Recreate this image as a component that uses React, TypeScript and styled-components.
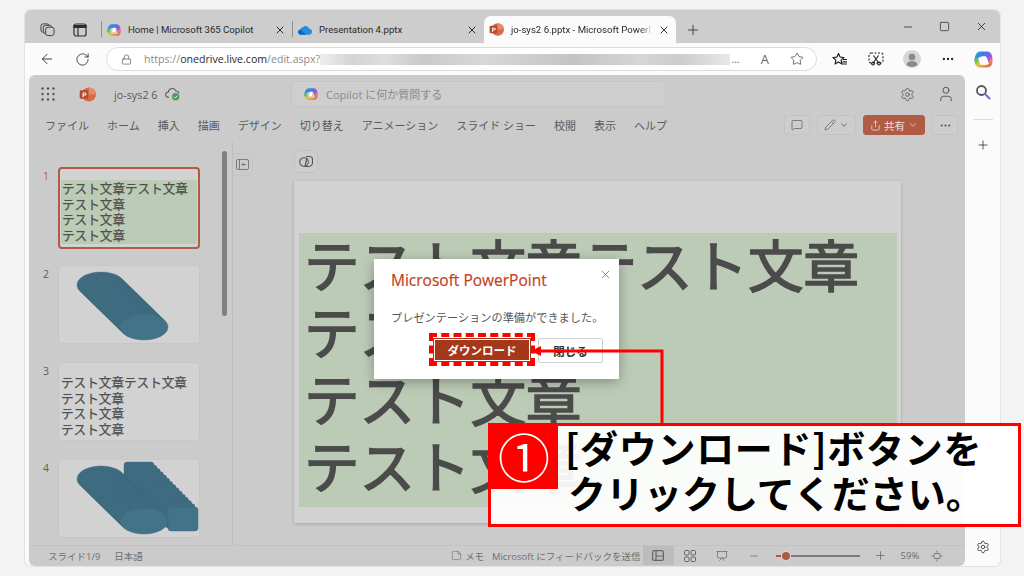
import React from "react";
import styled, { createGlobalStyle } from "styled-components";
import {
  ArrowLeft,
  RotateCw,
  Lock,
  Star,
  Ellipsis,
  Plus,
  Settings,
  User,
  X,
  Minus,
  Square,
  MessageSquare,
  Pencil,
  ChevronDown,
  Share,
  Presentation,
  StickyNote,
} from "lucide-react";

const Global = createGlobalStyle`
  html, body { margin: 0; padding: 0; background: #f3f3f3; }
  body { font-family: "Open Sans", "Noto Sans CJK JP", sans-serif; overflow: hidden; }
  * { box-sizing: border-box; }
`;

const Page = styled.div`
  position: relative;
  width: 1024px;
  height: 576px;
  padding: 10px 24px 10px 25px;
  overflow: hidden;
`;

const Browser = styled.div`
  height: 556px;
  border-radius: 6px;
  background: #f9f9f9;
  overflow: hidden;
  display: flex;
  flex-direction: column;
  box-shadow: 0 0 0 1px #e2e2e2;
`;

const TabStrip = styled.div`
  height: 33px;
  flex: none;
  background: #cdcdcd;
  display: flex;
  align-items: flex-end;
  padding-left: 14px;
`;

const StripIcon = styled.div<{ $mr?: number; $ml?: number }>`
  width: 16px;
  height: 27px;
  margin-left: ${(p) => p.$ml ?? 0}px;
  margin-right: ${(p) => p.$mr ?? 17}px;
  display: flex;
  align-items: center;
  justify-content: center;
  color: #3c3c3c;
`;

const Sep = styled.div`
  width: 1px;
  height: 16px;
  background: #8f8f8f;
  margin-bottom: 6px;
  flex: none;
`;

const Tab = styled.div<{ $active?: boolean; $w: number }>`
  width: ${(p) => p.$w}px;
  height: 27px;
  flex: none;
  display: flex;
  align-items: center;
  padding: 0 6px 0 5px;
  gap: 6px;
  font-family: Roboto, "Noto Sans CJK JP", sans-serif;
  font-size: 9.6px;
  color: #2a2a2a;
  border-radius: 7px 7px 0 0;
  background: ${(p) => (p.$active ? "#fbfbfb" : "transparent")};
`;

const TabTitle = styled.span<{ $fade?: boolean }>`
  flex: 1;
  white-space: nowrap;
  overflow: hidden;
  padding-left: 1px;
  ${(p) => p.$fade && "mask-image: linear-gradient(90deg, #000 92%, transparent 100%);"}
`;

const WindowButtons = styled.div`
  margin-left: auto;
  height: 33px;
  display: flex;
  align-items: center;
  gap: 25px;
  padding: 0 12px 0 0;
  color: #222;
`;

const AddressRow = styled.div`
  height: 32px;
  flex: none;
  background: #fbfbfb;
  display: flex;
  align-items: center;
  padding-left: 14px;
  color: #333;
`;

const NavIcon = styled.div<{ $w?: number }>`
  width: ${(p) => p.$w ?? 36}px;
  flex: none;
  display: flex;
  align-items: center;
  color: #333;
`;

const UrlPill = styled.div`
  width: 711px;
  height: 24px;
  flex: none;
  margin-left: 2px;
  border: 1px solid #dcdcdc;
  border-radius: 12px;
  background: #fff;
  display: flex;
  align-items: center;
  padding-left: 14px;
  font-size: 10.6px;
  color: #8a8a8a;
`;

const UrlLock = styled(Lock)`
  margin-right: 12px;
  color: #555;
  flex: none;
`;

const UrlHost = styled.span`
  color: #2a2a2a;
`;

const UrlBlur = styled.div`
  width: 410px;
  height: 11px;
  flex: none;
  background: linear-gradient(90deg, #eee 0%, #d4d4d4 8%, #dedede 16%, #c9c9c9 25%, #d8d8d8 40%, #cfcfcf 50%, #c4c4c4 62%, #d6d6d6 78%, #cccccc 88%, #e8e8e8 100%);
  filter: blur(0.6px);
`;

const UrlTail = styled.div`
  margin-left: auto;
  display: flex;
  align-items: center;
  gap: 21px;
  padding-right: 12px;
  color: #666;
`;

const ReadAloud = styled.span`
  font-size: 13px;
`;

const ToolGroup = styled.div`
  display: flex;
  align-items: center;
  margin-left: 15px;
  gap: 19.5px;
  color: #222;
`;

const Avatar = styled.svg`
  width: 18px;
  height: 18px;
  flex: none;
`;

const Body = styled.div`
  flex: 1;
  display: flex;
  min-height: 0;
  padding-left: 4px;
`;

const PptApp = styled.div`
  width: 936px;
  flex: none;
  background: #cbcbcb;
  border-radius: 6px;
  display: flex;
  flex-direction: column;
  overflow: hidden;
`;

const AppHeader = styled.div`
  height: 35px;
  flex: none;
  display: flex;
  align-items: center;
  padding: 3px 0 0 12px;
  color: #555;
`;

const LogoGap = styled.span`
  width: 24px;
  flex: none;
`;

const DocName = styled.span`
  font-size: 10.8px;
  color: #5a5a5a;
  margin-left: 18px;
  width: 51px;
  white-space: nowrap;
`;

const AskBox = styled.div`
  width: 375px;
  height: 26px;
  margin-left: 110px;
  border: 1px solid #c4c4c4;
  border-radius: 4px;
  background: #cecece;
  display: flex;
  align-items: center;
  gap: 8px;
  padding-left: 12px;
  font-size: 11px;
  color: #8b8b8b;
`;

const HeaderRight = styled.div`
  margin-left: auto;
  display: flex;
  align-items: center;
  gap: 22px;
  padding-right: 10px;
  color: #555;
`;

const Ribbon = styled.div`
  height: 32px;
  flex: none;
  display: flex;
  align-items: center;
  padding: 0 7px 2px 16px;
  font-size: 11px;
  color: #5a5a5a;
  gap: 18px;
`;

const RibbonItem = styled.span`
  white-space: nowrap;
`;

const RibbonRight = styled.div`
  margin-left: auto;
  display: flex;
  align-items: center;
  gap: 7px;
`;

const RibbonBtn = styled.div<{ $w: number; $primary?: boolean }>`
  width: ${(p) => p.$w}px;
  height: 20px;
  border-radius: 3px;
  border: 1px solid ${(p) => (p.$primary ? "#b05c45" : "#c3c3c3")};
  background: ${(p) => (p.$primary ? "#b05c45" : "#cdcdcd")};
  color: ${(p) => (p.$primary ? "#e4cfc8" : "#5a5a5a")};
  display: flex;
  align-items: center;
  justify-content: center;
  gap: 3px;
  font-size: 10.5px;
  font-weight: 500;
`;

const Main = styled.div`
  flex: 1;
  display: flex;
  min-height: 0;
`;

const ThumbPanel = styled.div`
  width: 204px;
  flex: none;
  display: flex;
  border-right: 1px solid #bdbdbd;
`;

const ThumbList = styled.div`
  width: 193px;
  padding-top: 25px;
  display: flex;
  flex-direction: column;
  gap: 18px;
  flex: none;
`;

const ThumbRow = styled.div`
  display: flex;
`;

const ThumbNum = styled.div<{ $active?: boolean }>`
  width: 29px;
  padding: 2px 0 0 14px;
  font-size: 10.5px;
  color: ${(p) => (p.$active ? "#b05c45" : "#5e5e5e")};
  flex: none;
`;

const Thumb = styled.div<{ $active?: boolean }>`
  width: 142px;
  height: ${(p) => (p.$active ? 82 : 79)}px;
  margin-bottom: ${(p) => (p.$active ? -2 : 0)}px;
  padding-bottom: ${(p) => (p.$active ? 3 : 3)}px;
  background: #d2d2d2;
  border-radius: 4px;
  border: ${(p) => (p.$active ? "2px solid #b05c45" : "1px solid #c7c7c7")};
  overflow: hidden;
  display: flex;
  flex-direction: column;
  justify-content: flex-end;
`;

const ArtThumb = styled(Thumb)`
  padding-bottom: 0;
  justify-content: flex-start;
`;

const ThumbText = styled.div<{ $green?: boolean }>`
  margin: 0 ${(p) => (p.$green ? 1 : 0)}px;
  padding: 0 0 ${(p) => (p.$green ? 2 : 1)}px ${(p) => (p.$green ? 1 : 2)}px;
  background: ${(p) => (p.$green ? "#bccbb6" : "transparent")};
  font-size: 12.6px;
  line-height: 15.4px;
  color: #4f4f4f;
  white-space: nowrap;
  font-family: "Noto Sans CJK JP", sans-serif;
  -webkit-text-stroke: 0.25px #4f4f4f;
`;

const ScrollBar = styled.div`
  width: 5px;
  height: 165px;
  margin-top: 9px;
  border-radius: 3px;
  background: #808080;
  flex: none;
`;

const Canvas = styled.div`
  flex: 1;
  display: flex;
  padding-top: 8px;
`;

const CollapseBtn = styled.div`
  width: 20px;
  height: 23px;
  margin-top: 3px;
  border: 1px solid #c3c3c3;
  border-left: none;
  border-radius: 0 5px 5px 0;
  color: #7a7a7a;
  display: flex;
  align-items: center;
  justify-content: center;
  flex: none;
`;

const SlideCol = styled.div`
  margin-left: 41px;
  width: 607px;
  display: flex;
  flex-direction: column;
  gap: 8px;
`;

const SmallTool = styled.div`
  width: 24px;
  height: 23px;
  border: 1px solid #c3c3c3;
  border-radius: 5px;
  background: #cdcdcd;
  color: #555;
  display: flex;
  align-items: center;
  justify-content: center;
`;

const Slide = styled.div`
  width: 607px;
  height: 342px;
  background: #d2d2d2;
  box-shadow: 0 1px 3px rgba(0, 0, 0, 0.2);
  padding: 52px 4px 16px 5px;
`;

const SlideGreen = styled.div`
  height: 274px;
  background: #bccbb6;
  padding-left: 5px;
  overflow: hidden;
`;

const SlideLines = styled.div`
  margin-top: -3px;
  font-family: "Noto Sans CJK JP", sans-serif;
  font-size: 55.5px;
  line-height: 67px;
  color: #4b4b4b;
  white-space: nowrap;
  -webkit-text-stroke: 1.6px #4b4b4b;
`;

const StatusBar = styled.div`
  height: 21px;
  flex: none;
  display: flex;
  align-items: stretch;
  padding: 0 0 1px 19px;
  font-size: 9.5px;
  color: #6e6e6e;
  border-top: 1px solid #c3c3c3;
`;

const StatusText = styled.span<{ $ml?: number }>`
  margin-left: ${(p) => p.$ml ?? 0}px;
  white-space: nowrap;
  display: flex;
  align-items: center;
  gap: 3px;
`;

const ViewBtn = styled.div<{ $on?: boolean; $w?: number; $ml?: number }>`
  width: ${(p) => p.$w ?? 32}px;
  margin-left: ${(p) => p.$ml ?? 0}px;
  flex: none;
  display: flex;
  align-items: center;
  justify-content: center;
  background: ${(p) => (p.$on ? "#bcbcbc" : "transparent")};
  color: #666;
`;

const ZoomTrack = styled.div`
  width: 84px;
  height: 2px;
  background: #7c7c7c;
  position: relative;
  align-self: center;
  margin: 0 5px 0 6px;
  flex: none;
`;

const ZoomDone = styled.div`
  position: absolute;
  left: 0;
  top: 0;
  width: 6px;
  height: 2px;
  background: #b05c45;
`;

const ZoomKnob = styled.div`
  position: absolute;
  left: 6px;
  top: -3px;
  width: 8px;
  height: 8px;
  border-radius: 50%;
  background: #b05c45;
  box-shadow: 0 0 0 1px #d8d8d8;
`;

const SideRail = styled.div`
  flex: 1;
  background: #fbfbfb;
  display: flex;
  flex-direction: column;
  align-items: center;
  padding: 9px 0 12px;
  color: #333;
`;

const RailRule = styled.div`
  width: 20px;
  height: 1px;
  background: #dcdcdc;
  margin: 19px 0 18px;
`;

const RailBottom = styled.div`
  margin-top: auto;
  display: flex;
`;

const Dialog = styled.div`
  position: absolute;
  left: 374px;
  top: 259px;
  width: 245px;
  height: 120px;
  background: #fff;
  box-shadow: 0 3px 12px rgba(0, 0, 0, 0.3);
  padding: 11px 16px 0 17px;
`;

const DialogClose = styled.div`
  position: absolute;
  top: 5px;
  right: 7px;
  color: #666;
`;

const DialogTitle = styled.div`
  font-size: 15.5px;
  line-height: 20px;
  color: #c43e1c;
  -webkit-text-stroke: 0.2px #c43e1c;
`;

const DialogText = styled.div`
  margin-top: 20px;
  font-size: 11.2px;
  line-height: 16px;
  color: #555;
  white-space: nowrap;
`;

const DialogActions = styled.div`
  margin-top: 12px;
  display: flex;
  justify-content: flex-end;
  gap: 8px;
`;

const PrimaryBtn = styled.div`
  width: 96px;
  height: 22px;
  margin-top: 1px;
  background: #a5371b;
  box-shadow: inset 0 0 0 1px #fff, 0 0 0 1px #a5371b;
  color: #fff;
  font-size: 11.5px;
  font-weight: 700;
  display: flex;
  align-items: center;
  justify-content: center;
  position: relative;
`;

const Dashed = styled.div`
  position: absolute;
  left: -5px;
  top: -6px;
  width: 106px;
  height: 33px;
  border: 4px dashed #f00;
`;

const SecondaryBtn = styled.div`
  width: 65px;
  height: 25px;
  border: 1px solid #cfcfcf;
  border-radius: 2px;
  color: #333;
  font-size: 11.5px;
  font-weight: 700;
  display: flex;
  align-items: center;
  justify-content: center;
`;

const ArrowLayer = styled.svg`
  position: absolute;
  left: 0;
  top: 0;
  pointer-events: none;
`;

const Callout = styled.div`
  position: absolute;
  left: 488px;
  top: 423px;
  width: 533px;
  height: 104px;
  border: 3px solid #f00;
  background: rgba(255, 255, 255, 0.93);
  display: flex;
  font-family: "Noto Sans CJK JP", sans-serif;
  color: #000;
`;

const CalloutBadge = styled.div`
  width: 68px;
  height: 64px;
  margin: -1px 0 0 -1px;
  flex: none;
  background: #f00;
  color: #fff;
  font-size: 52px;
  line-height: 62px;
  text-align: center;
`;

const CalloutText = styled.div`
  padding: 0 0 0 7px;
  font-size: 38px;
  font-weight: 700;
  line-height: 45px;
  margin-top: -2px;
  white-space: nowrap;
`;

const CalloutLine = styled.div<{ $ml?: number; $ls?: number }>`
  margin-left: ${(p) => p.$ml ?? 0}px;
  letter-spacing: ${(p) => p.$ls ?? 0}px;
`;

const CopilotIcon = ({ size = 14 }: { size?: number }) => (
  <svg width={size} height={size} viewBox="0 0 24 24">
    <defs>
      <linearGradient id="cpTop" x1="0" y1="0" x2="1" y2="0.6">
        <stop offset="0" stopColor="#2fb5c9" />
        <stop offset="0.35" stopColor="#2f86ea" />
        <stop offset="0.7" stopColor="#7b5fe6" />
        <stop offset="1" stopColor="#d95bc0" />
      </linearGradient>
      <linearGradient id="cpBottom" x1="0" y1="0.3" x2="1" y2="1">
        <stop offset="0" stopColor="#49b96b" />
        <stop offset="0.35" stopColor="#e9c53a" />
        <stop offset="0.7" stopColor="#f0813a" />
        <stop offset="1" stopColor="#e6487f" />
      </linearGradient>
    </defs>
    <path d="M8 2h8c4 0 6 2 7 6 .5 3 .5 6-.5 9-1 1.500-3 1.500-4-.5l-2-6c-.5-1.500-1.500-2-3-2H9C7 8.500 5 10 4.500 12L3.500 15C2.500 16.500 1 16 .8 14 .5 8 3 2 8 2z" fill="url(#cpTop)" />
    <path d="M16 22H8c-4 0-6-2-7-6-.5-3-.5-5 1-6.500C3 8.500 5 9 5.500 11l2 6c.5 1.500 1.500 2 3 2H15c2 0 4-1.500 4.500-3.500l1-3c1-1.500 2.500-1 2.700 1 .3 5.500-2.200 8.500-7.200 8.500z" fill="url(#cpBottom)" />
    <path d="M10 8h5l-1.500 8H9z" fill="#fff" />
  </svg>
);

const PptIcon = ({ size = 16 }: { size?: number }) => (
  <svg width={size} height={size} viewBox="0 0 24 24">
    <circle cx="14" cy="12" r="10" fill="#d8684a" />
    <path d="M14 2a10 10 0 0 1 10 10H14z" fill="#e98a6c" />
    <rect x="1" y="6" width="12" height="12" rx="2" fill="#b5492c" />
    <path d="M5 9h3.500a2.200 2.200 0 0 1 0 4.400H6.500V16H5zM6.500 10.300v1.800h1.800a.9.9 0 0 0 0-1.800z" fill="#fff" />
  </svg>
);

const OneDriveIcon = () => (
  <svg width="14" height="10" viewBox="0 0 24 16">
    <path d="M9 3a6 6 0 0 1 10 3c3 0 5 2 5 5s-2 5-5 5H5c-3 0-5-2-5-4.500S2 7 4 7c1-2 3-4 5-4z" fill="#1f8fe0" />
    <path d="M0 11.500C0 9 2 7 4.500 7L14 16H5c-3 0-5-2-5-4.500z" fill="#0f6cbd" />
  </svg>
);

const CloudCheck = () => (
  <svg width="16" height="14" viewBox="0 0 24 20" fill="none">
    <path d="M6 15H5a4 4 0 0 1 0-8 6 6 0 0 1 11.500-1.500A4.500 4.500 0 0 1 21 9" stroke="#5a5a5a" strokeWidth="1.600" />
    <circle cx="16" cy="14" r="5.500" fill="#4f9a5c" />
    <path d="M13.500 14l2 2 3-3.500" stroke="#dfe" strokeWidth="1.300" />
  </svg>
);

const Waffle = () => (
  <svg width="14" height="14" viewBox="0 0 14 14" fill="#555">
    {[1.5, 7, 12.5].map((y) =>
      [1.5, 7, 12.5].map((x) => <circle key={`${x}-${y}`} cx={x} cy={y} r="1.200" />)
    )}
  </svg>
);

const WorkspacesIcon = () => (
  <svg width="15" height="15" viewBox="0 0 16 16" fill="#cdcdcd" stroke="#3c3c3c" strokeWidth="1">
    <rect x="1" y="2" width="9" height="9" rx="2.500" />
    <rect x="3.500" y="3.500" width="9" height="9" rx="2.500" />
    <rect x="6" y="5.500" width="9" height="9" rx="2.500" />
  </svg>
);

const VerticalTabsIcon = () => (
  <svg width="14" height="14" viewBox="0 0 14 14" fill="none" stroke="#2e2e2e" strokeWidth="1.200">
    <rect x="1" y="1" width="12" height="12" rx="2" />
    <path d="M1 2.500h12v2H1z" fill="#2e2e2e" />
    <path d="M5 4v9" />
  </svg>
);

const FavoritesIcon = () => (
  <svg width="16" height="15" viewBox="0 0 16 15" fill="none" stroke="#222" strokeWidth="1.200" strokeLinejoin="round">
    <path d="M6.500 1.500l1.600 3.600 3.900.4-2.900 2.600.8 3.800-3.400-2-3.400 2 .8-3.800L1 5.500l3.900-.4z" />
    <path d="M11 7.500h4M10.500 9.800h4.500M10 12h5" />
  </svg>
);

const ScreenshotIcon = () => (
  <svg width="16" height="14" viewBox="0 0 16 14" fill="none" stroke="#222" strokeWidth="1.100">
    <rect x="1" y="1" width="14" height="10" rx="2" strokeDasharray="2 1.500" />
    <path d="M5.500 3.500l5 7M10.500 3.500l-5 7" />
    <circle cx="5" cy="11.500" r="1.400" />
    <circle cx="11" cy="11.500" r="1.400" />
  </svg>
);

const SearchIcon = () => (
  <svg width="16" height="16" viewBox="0 0 16 16" fill="none">
    <circle cx="6.500" cy="6.500" r="4.500" stroke="#555" strokeWidth="1.800" />
    <path d="M10 10l4.500 4.500" stroke="#8a5bd6" strokeWidth="2" strokeLinecap="round" />
  </svg>
);

const ReadPanelIcon = () => (
  <svg width="13" height="11" viewBox="0 0 13 11" fill="none" stroke="#7a7a7a" strokeWidth="1">
    <rect x="0.500" y="0.500" width="12" height="10" rx="1.500" />
    <path d="M3.500 1v9M10 5.500H6M7.500 4L6 5.500 7.500 7" />
  </svg>
);

const DesignerIcon = () => (
  <svg width="14" height="14" viewBox="0 0 14 14" fill="none" stroke="#555" strokeWidth="1.100">
    <circle cx="5" cy="7" r="4.300" />
    <path d="M7 1.500h3.500a3 3 0 0 1 3 3v3a4 4 0 0 1-4 4H5.500" />
    <path d="M8 3l-2 8" />
  </svg>
);

const NormalViewIcon = () => (
  <svg width="12" height="11" viewBox="0 0 12 11" fill="none" stroke="#666" strokeWidth="1.200">
    <rect x="0.600" y="0.600" width="10.800" height="9.800" rx="1.500" />
    <path d="M4 1v9M4 6h7" />
  </svg>
);

const SorterIcon = () => (
  <svg width="12" height="12" viewBox="0 0 12 12" fill="none" stroke="#666" strokeWidth="1">
    <rect x="0.500" y="0.500" width="4.500" height="4.500" rx="1" />
    <rect x="7" y="0.500" width="4.500" height="4.500" rx="1" />
    <rect x="0.500" y="7" width="4.500" height="4.500" rx="1" />
    <rect x="7" y="7" width="4.500" height="4.500" rx="1" />
  </svg>
);

const FitIcon = () => (
  <svg width="12" height="12" viewBox="0 0 12 12" fill="none" stroke="#777" strokeWidth="1">
    <rect x="3" y="3.500" width="6" height="5" rx="1" />
    <path d="M6 0.500v2M6 9.500v2M0.500 6h1.500M10 6h1.500" />
  </svg>
);

const Cylinder = ({ x1, y1, x2, y2 }: { x1: number; y1: number; x2: number; y2: number }) => {
  const steps = 16;
  return (
    <>
      {Array.from({ length: steps + 1 }, (_, i) => (
        <ellipse
          key={i}
          cx={x1 + ((x2 - x1) * i) / steps}
          cy={y1 + ((y2 - y1) * i) / steps}
          rx="24"
          ry="13"
          fill={i === steps ? "#427389" : "#3f6c81"}
          stroke="#3b6476"
          strokeWidth="0.400"
        />
      ))}
    </>
  );
};

const Blocks = () => {
  const steps = 14;
  return (
    <>
      {Array.from({ length: steps + 1 }, (_, i) => (
        <rect
          key={i}
          x={65 + (44 * i) / steps}
          y={2 + (45 * i) / steps}
          width="30"
          height="24"
          rx="3"
          fill={i === steps ? "#427389" : "#3f6c81"}
          stroke="#3b6476"
          strokeWidth="0.400"
        />
      ))}
    </>
  );
};

const ThumbArt = ({ blocks }: { blocks?: boolean }) => (
  <svg width="140" height="77" viewBox="0 0 140 77">
    {blocks && <Blocks />}
    <Cylinder x1={42} y1={19} x2={85} y2={61} />
  </svg>
);

const textLines = ["テスト文章テスト文章", "テスト文章", "テスト文章", "テスト文章"];
const menu = ["ファイル", "ホーム", "挿入", "描画", "デザイン", "切り替え", "アニメーション", "スライド ショー", "校閲", "表示", "ヘルプ"];

export default function App() {
  return (
    <Page>
      <Global />
      <Browser>
        <TabStrip>
          <StripIcon><WorkspacesIcon /></StripIcon>
          <StripIcon $mr={13}><VerticalTabsIcon /></StripIcon>
          <Sep />
          <Tab $w={190}>
            <CopilotIcon />
            <TabTitle>Home | Microsoft 365 Copilot</TabTitle>
            <X size={12} color="#333" />
          </Tab>
          <Sep />
          <Tab $w={191}>
            <OneDriveIcon />
            <TabTitle>Presentation 4.pptx</TabTitle>
            <X size={12} color="#333" />
          </Tab>
          <Tab $active $w={192}>
            <PptIcon size={15} />
            <TabTitle $fade>jo-sys2 6.pptx - Microsoft PowerP</TabTitle>
            <X size={12} color="#333" />
          </Tab>
          <StripIcon $ml={9}><Plus size={16} strokeWidth={1.4} /></StripIcon>
          <WindowButtons>
            <Minus size={12} strokeWidth={1.5} />
            <Square size={11} strokeWidth={1.5} />
            <X size={13} strokeWidth={1.5} />
          </WindowButtons>
        </TabStrip>
        <AddressRow>
          <NavIcon><ArrowLeft size={16} strokeWidth={1.4} /></NavIcon>
          <NavIcon $w={29}><RotateCw size={15} strokeWidth={1.4} /></NavIcon>
          <UrlPill>
            <UrlLock size={11} strokeWidth={1.5} />
            https://<UrlHost>onedrive.live.com</UrlHost>/edit.aspx?
            <UrlBlur />
            <UrlTail>
              <span>…</span>
              <ReadAloud>A</ReadAloud>
              <Star size={14} strokeWidth={1.3} color="#444" />
            </UrlTail>
          </UrlPill>
          <ToolGroup>
            <FavoritesIcon />
            <ScreenshotIcon />
            <Avatar viewBox="0 0 18 18">
              <circle cx="9" cy="9" r="9" fill="#d5d5d5" />
              <circle cx="9" cy="7" r="3.300" fill="#8a8a8a" />
              <path d="M3.500 15c.5-3 2.500-4 5.500-4s5 1 5.500 4a9 9 0 0 1-11 0z" fill="#8a8a8a" />
            </Avatar>
            <Ellipsis size={14} />
            <CopilotIcon size={19} />
          </ToolGroup>
        </AddressRow>
        <Body>
          <PptApp>
            <AppHeader>
              <Waffle />
              <LogoGap />
              <PptIcon size={17} />
              <DocName>jo-sys2 6</DocName>
              <CloudCheck />
              <AskBox>
                <CopilotIcon />
                Copilot に何か質問する
              </AskBox>
              <HeaderRight>
                <Settings size={15} strokeWidth={1.3} />
                <User size={18} strokeWidth={1.3} />
              </HeaderRight>
            </AppHeader>
            <Ribbon>
              {menu.map((m) => (
                <RibbonItem key={m}>{m}</RibbonItem>
              ))}
              <RibbonRight>
                <RibbonBtn $w={26}><MessageSquare size={12} strokeWidth={1.4} /></RibbonBtn>
                <RibbonBtn $w={39}><Pencil size={12} strokeWidth={1.4} /><ChevronDown size={10} /></RibbonBtn>
                <RibbonBtn $w={62} $primary><Share size={11} />共有<ChevronDown size={10} /></RibbonBtn>
                <RibbonBtn $w={26}><Ellipsis size={13} /></RibbonBtn>
              </RibbonRight>
            </Ribbon>
            <Main>
              <ThumbPanel>
                <ThumbList>
                  <ThumbRow>
                    <ThumbNum $active>1</ThumbNum>
                    <Thumb $active>
                      <ThumbText $green>{textLines.map((t, i) => <div key={i}>{t}</div>)}</ThumbText>
                    </Thumb>
                  </ThumbRow>
                  <ThumbRow>
                    <ThumbNum>2</ThumbNum>
                    <ArtThumb><ThumbArt /></ArtThumb>
                  </ThumbRow>
                  <ThumbRow>
                    <ThumbNum>3</ThumbNum>
                    <Thumb>
                      <ThumbText>{textLines.map((t, i) => <div key={i}>{t}</div>)}</ThumbText>
                    </Thumb>
                  </ThumbRow>
                  <ThumbRow>
                    <ThumbNum>4</ThumbNum>
                    <ArtThumb><ThumbArt blocks /></ArtThumb>
                  </ThumbRow>
                </ThumbList>
                <ScrollBar />
              </ThumbPanel>
              <Canvas>
                <CollapseBtn><ReadPanelIcon /></CollapseBtn>
                <SlideCol>
                  <SmallTool><DesignerIcon /></SmallTool>
                  <Slide>
                    <SlideGreen>
                      <SlideLines>{textLines.map((t, i) => <div key={i}>{t}</div>)}</SlideLines>
                    </SlideGreen>
                  </Slide>
                </SlideCol>
              </Canvas>
            </Main>
            <StatusBar>
              <StatusText>スライド1/9</StatusText>
              <StatusText $ml={14}>日本語</StatusText>
              <StatusText $ml={308}><StickyNote size={11} strokeWidth={1.3} />メモ</StatusText>
              <StatusText $ml={8}>Microsoft にフィードバックを送信</StatusText>
              <ViewBtn $on $w={31} $ml={2}><NormalViewIcon /></ViewBtn>
              <ViewBtn><SorterIcon /></ViewBtn>
              <ViewBtn><Presentation size={12} strokeWidth={1.4} /></ViewBtn>
              <ViewBtn><Minus size={12} strokeWidth={1.4} /></ViewBtn>
              <ZoomTrack><ZoomDone /><ZoomKnob /></ZoomTrack>
              <ViewBtn><Plus size={13} strokeWidth={1.4} /></ViewBtn>
              <StatusText $ml={4}>59%</StatusText>
              <ViewBtn $w={36}><FitIcon /></ViewBtn>
            </StatusBar>
          </PptApp>
          <SideRail>
            <SearchIcon />
            <RailRule />
            <Plus size={14} strokeWidth={1.4} />
            <RailBottom><Settings size={14} strokeWidth={1.4} /></RailBottom>
          </SideRail>
        </Body>
      </Browser>

      <Dialog>
        <DialogClose><X size={13} strokeWidth={1.4} /></DialogClose>
        <DialogTitle>Microsoft PowerPoint</DialogTitle>
        <DialogText>プレゼンテーションの準備ができました。</DialogText>
        <DialogActions>
          <PrimaryBtn>
            ダウンロード
            <Dashed />
          </PrimaryBtn>
          <SecondaryBtn>閉じる</SecondaryBtn>
        </DialogActions>
      </Dialog>

      <ArrowLayer width="1024" height="576" viewBox="0 0 1024 576">
        <path d="M662 425V351H540" fill="none" stroke="#f00" strokeWidth="3" />
        <path d="M531 351l10-5v10z" fill="#f00" />
      </ArrowLayer>

      <Callout>
        <CalloutBadge>①</CalloutBadge>
        <CalloutText>
          <CalloutLine $ls={0.7}>[ダウンロード]ボタンを</CalloutLine>
          <CalloutLine $ml={3}>クリックしてください。</CalloutLine>
        </CalloutText>
      </Callout>
    </Page>
  );
}
